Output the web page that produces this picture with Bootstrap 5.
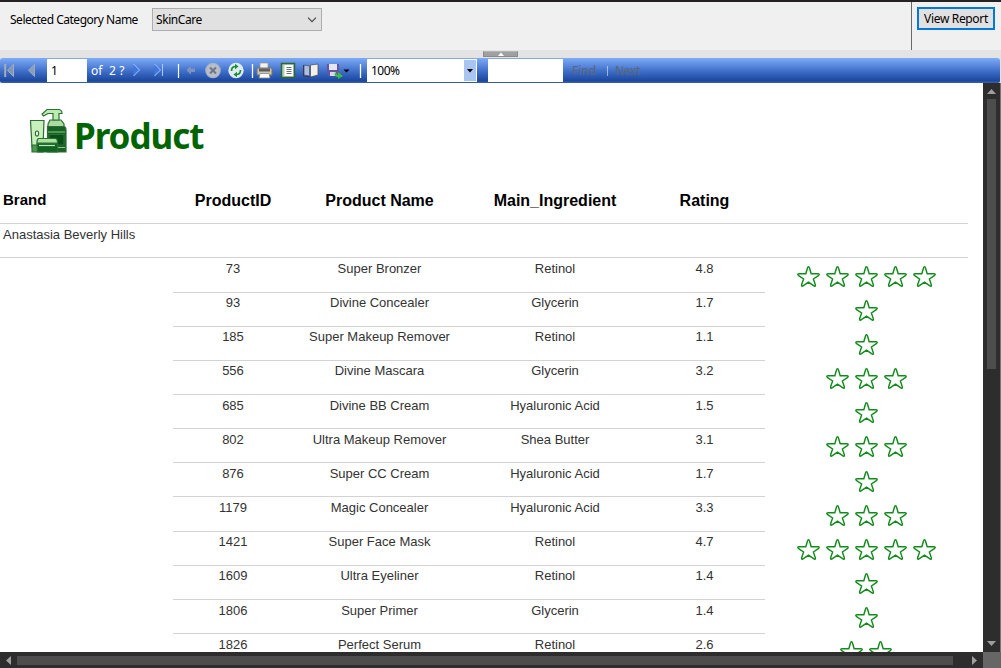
<!DOCTYPE html>
<html lang="en">
<head>
<meta charset="utf-8">
<title>Product report</title>
<link href="https://cdn.jsdelivr.net/npm/bootstrap@5.3.0/dist/css/bootstrap.min.css" rel="stylesheet">
<style>
body{font-family:"Liberation Sans",Arial,sans-serif;height:668px;width:1001px;background:#fff}
.ui{font-family:"Noto Sans","Open Sans",sans-serif;font-size:12px;line-height:16px;color:#000;white-space:nowrap}
.params{height:50px;background:#f0f0f0;border-top:2px solid #252223}
.plabel{width:142px;margin-left:10px;padding-top:10px;letter-spacing:-.49px}
.combo{width:170px;height:23px;margin-top:6px;border:1px solid #adadad;background:#e1e1e1;padding:0 4px 0 3px;letter-spacing:-.42px}
.runpane{width:90px;border-left:1px solid #696969;padding:5px 0 0 5px}
.run{width:78px;height:23px;border:2px solid #0078d7;background:#e1e1e1;border-radius:0;padding:0;letter-spacing:-.34px}
.splitter{height:8px;background:#e3e3e3}
.grip{width:35px;height:6px;margin-left:483px;margin-top:1px;background:#a0a0a0;border:1px solid #8a8a8a;border-top-color:#b5b5b5}
.tools{height:25px;background:#e3e3e3}
.toolbar{height:25px;width:1000px;background:linear-gradient(#7dabf5 0,#6594e6 20%,#3d6cc6 55%,#1c489f 90%,#3861ab 100%);border-radius:3px 3px 2px 2px;color:#fff}
.toolbar>*{flex:none}
.box{height:23px;background:#fff;color:#000;padding:4px 0 0 4px}
.dim{color:#5c6675}
.sheet{width:983px;height:569px;background:#fff}
.heading{height:94px;padding:24px 0 0 28px}
.title{font:bold 35px/58px "Noto Sans","Open Sans",sans-serif;color:#006400;letter-spacing:-1.05px;margin-left:6px}
.rpt{width:968px;font-size:13px;line-height:16px;color:#333}
.line{display:grid;grid-template-columns:173px 120px 173px 178px 121px 203px;text-align:center}
.line.head{height:47px;border-bottom:1px solid #d3d3d3;font-weight:700;font-size:16px;line-height:18px;color:#000;padding-top:15px}
.line.group{height:34.4px;border-bottom:1px solid #d3d3d3;padding:3px 0 0 3px;text-align:left}
.line.item{height:34.17px}
.cellv{border-bottom:1px solid #d3d3d3;padding-top:2.6px}
.stars{padding:6.200px 1px 0 0;gap:6px}
.stars svg{width:23px;height:23px;flex:none}
.vbar{width:18px;background:#2d2d2d;border-right:1px solid #777}
.vthumb{width:9px;height:270px;background:#4d4d4d;margin:5px 0 0 4px}
.hbar{height:16px;background:#2d2d2d}
.hthumb{width:936px;height:9px;background:#4d4d4d}
svg{display:block}
</style>
<script src="https://cdn.jsdelivr.net/npm/bootstrap@5.3.0/dist/js/bootstrap.bundle.min.js"></script>
</head>
<body class="overflow-hidden m-0">
<svg width="0" height="0" class="position-absolute"><symbol id="star" viewBox="0 0 24 24"><path d="M12 1.8C12.7 1.8 12.9 2.5 13.2 3.6L14.8 9.2H21.6C23.6 9.2 23.5 10.2 22.3 11L17.1 14.6L19 20.2C19.7 22.2 18.6 22.5 17.3 21.6L12 17.8L6.7 21.6C5.4 22.5 4.3 22.2 5 20.2L6.9 14.6L1.7 11C.5 10.2.4 9.2 2.4 9.2H9.2L10.8 3.6C11.1 2.5 11.3 1.8 12 1.8Z" fill="none" stroke="#128a1c" stroke-width="1.5"/></symbol></svg>

<div class="params ui d-flex">
  <div class="plabel">Selected Category Name</div>
  <div class="combo d-flex align-items-center justify-content-between"><span>SkinCare</span><svg width="10" height="6"><path d="M1 .7 5 4.7 9 .7" fill="none" stroke="#444" stroke-width="1.1"/></svg></div>
  <div class="runpane ms-auto"><button class="run ui d-block">View Report</button></div>
</div>
<div class="splitter d-flex"><div class="grip d-flex justify-content-center"><svg width="6" height="4"><path d="M0 4 3 .5 6 4Z" fill="#fff"/></svg></div></div>
<div class="tools">
<div class="toolbar ui d-flex align-items-center">
  <svg width="47" height="25"><g stroke="#b8bfcc" fill="#7f93b6"><path d="M5.2 6V19" stroke="#a4abb8" stroke-width="2"/><path d="M13.5 6.2V18.5L7.5 12.3Z" fill="#8296b8" stroke="#a3adbf"/><path d="M34.5 6.2V18.5L28.5 12.3Z" fill="#8c9dbb" stroke="#9ca8be"/></g></svg>
  <div class="box" style="width:40px">1</div>
  <span style="width:42px;padding-left:4px;letter-spacing:.1px">of&nbsp; 2 ?</span>
  <svg width="58" height="25"><path d="M4.5 6V18L10 12Z" fill="#3e78dc"/><path d="M4.5 6 10.5 12 4.5 18" fill="none" stroke="#a9c8ff"/><path d="M25.5 6V18L31.500 12Z" fill="#3e78dc"/><path d="M25.500 6 31.500 12 25.500 18M33.500 6V18" fill="none" stroke="#a9c8ff"/><path d="M49.500 6V20" stroke="#fff" stroke-width="1.2"/></svg>
  <svg width="61" height="25"><path d="M-1 12 4 8V10.500H8V14H4V16.500Z" fill="#7d93be"/><circle cx="26" cy="12.500" r="7.800" fill="#a9b4c9"/><circle cx="26" cy="12.500" r="6.500" fill="#b9bec7"/><path d="M23 9.500 29 15.500M29 9.500 23 15.500" stroke="#6d7789" stroke-width="2"/><circle cx="49" cy="12.500" r="7.700" fill="#dfe9f8"/><path d="M44.500 13C44.500 9.500 46 8.500 48.500 8.500M53.500 12C53.500 15.500 52 16.500 49.500 16.500" fill="none" stroke="#159326" stroke-width="1.700"/><path d="M48 5.800 51.500 8.500 48 11.300ZM50 13.700 46.500 16.500 50 19.200Z" fill="#159326"/></svg>
  <svg width="119" height="25"><path d="M4.500 6V20M112.500 6V20" stroke="#fff" stroke-width="1.300"/>
    <path d="M12 5H20V11H12Z" fill="#f3f1e9" stroke="#999" stroke-width=".7"/><path d="M9 10H24V17H9Z" fill="#c8c5bb" stroke="#77756e"/><path d="M11 10.500H22V13.500H11Z" fill="#5f5d59"/><path d="M12 15.500H21L22 20H11Z" fill="#fff" stroke="#888" stroke-width=".8"/><path d="M21 14h2v1h-2z" fill="#f1cb28"/>
    <path d="M33.500 5.500H46.500V19.500H33.500Z" fill="#b5d0ae" stroke="#2c6636" stroke-width="1.500"/><path d="M36.500 7H45V18H36.500Z" fill="#fff"/><path d="M38.500 9.500H43.500M38.500 11.500H43.500M38.500 13.500H43.500M38.500 15.500H43.500" stroke="#59606f" stroke-width=".9"/>
    <path d="M56 7 61.500 8V18L56 17Z" fill="#aebedb" stroke="#526795"/><path d="M62.500 7 70 6V17L62.500 19Z" fill="#f2f0e8" stroke="#4e5260" stroke-width=".8"/><path d="M55.500 7V18L62 19" fill="none" stroke="#3b3c47"/>
    <path d="M79 6H91V18H81L79 16Z" fill="#6654a2"/><path d="M81 6H89V12H81Z" fill="#e5e5ef"/><path d="M82 14H88V18H82Z" fill="#d8d9e6"/><path d="M87 14 90 17V14L95 18 90 21V19C87 19 86 17 87 14Z" fill="#3dbb3d"/><path d="M95.500 11.500H101.500L98.500 14.500Z" fill="#000"/></svg>
  <div class="box d-flex justify-content-between" style="width:110px"><span style="letter-spacing:-.5px">100%</span><svg width="12" height="21" style="margin:-3px 1px 0 0"><path d="M0 0H12V21H0Z" fill="#a8c4f0"/><path d="M3 9H9L6 12.500Z"/></svg></div>
  <div class="box" style="width:75px;margin-left:11px"></div>
  <span class="dim" style="width:35px;margin-left:9px">Find</span>
  <svg width="8" height="25"><path d="M-.5 8V18" stroke="#fff" stroke-width="2"/></svg>
  <span class="dim" style="letter-spacing:-.3px">Next</span>
</div></div>

<div class="d-flex">
<main class="sheet overflow-hidden">
  <div class="heading d-flex align-items-start">
    <svg width="40" height="48" viewBox="0 0 40 48"><g stroke="#2e6d35" stroke-width="1.2">
      <path d="M20 17 22 13H33L36 17V20H20Z" fill="#a9dda0"/><path d="M25 13V6.500H20L15.500 9 14 7 19 2.500H31Q34 3 34 6.500H31V13Z" fill="#b9edaf"/>
      <path d="M19.500 19.500H36Q38 20 38 23V45H19.500Z" fill="#176126"/><path d="M21 27.500H36V38H21Z" fill="#075018"/><path d="M20 25H37M23 40.500H37" stroke="#8bca84"/>
      <path d="M2.500 13.500H16L15 40H4Z" fill="#c7f0bd"/><path d="M4 38H15V45H4Z" fill="#4c9a4d"/><ellipse cx="9" cy="26.500" rx="1.600" ry="2.500" fill="#fff"/>
      <path d="M9 35Q9 31.500 11 31.500H27Q29.500 31.500 29.500 35V36H9Z" fill="#a9e49f"/><path d="M9 36.500H29.500V45H9.500Z" fill="#116323"/><path d="M11 38.500H27" stroke="#bfe8b8"/></g></svg>
    <div class="title">Product</div>
  </div>
  <div class="rpt">
    <div class="line head"><div class="text-start ps-1" style="font-size:15px;line-height:16px;margin-left:-1px">Brand</div><div>ProductID</div><div>Product Name</div><div>Main_Ingredient</div><div>Rating</div></div>
    <div class="line group"><div>Anastasia Beverly Hills</div></div>
    <div id="items"></div>
  </div>
</main>
<div class="vbar"><svg width="17" height="11"><path d="M4 11 8.500 6 13 11Z" fill="#9f9f9f"/></svg><div class="vthumb"></div><svg width="17" height="283"><path d="M4 272H13L8.500 277Z" fill="#9f9f9f"/></svg></div>
</div>
<div class="hbar d-flex align-items-center"><svg width="17" height="16"><path d="M11 4V13L6 8.500Z" fill="#9f9f9f"/></svg><div class="hthumb"></div><svg width="30" height="16"><path d="M19 4V13L24 8.500Z" fill="#9f9f9f"/></svg><svg width="18" height="16"><path d="M0 0H18V16H0Z" fill="#666"/></svg></div>
<script>
const rows=[[73,'Super Bronzer','Retinol','4.8',5],[93,'Divine Concealer','Glycerin','1.7',1],[185,'Super Makeup Remover','Retinol','1.1',1],[556,'Divine Mascara','Glycerin','3.2',3],[685,'Divine BB Cream','Hyaluronic Acid','1.5',1],[802,'Ultra Makeup Remover','Shea Butter','3.1',3],[876,'Super CC Cream','Hyaluronic Acid','1.7',1],[1179,'Magic Concealer','Hyaluronic Acid','3.3',3],[1421,'Super Face Mask','Retinol','4.7',5],[1609,'Ultra Eyeliner','Retinol','1.4',1],[1806,'Super Primer','Glycerin','1.4',1],[1826,'Perfect Serum','Retinol','2.6',2]];
document.getElementById('items').innerHTML=rows.map(r=>'<div class="line item"><div></div>'+r.slice(0,4).map(v=>`<div class="cellv">${v}</div>`).join('')+'<div class="stars d-flex justify-content-center">'+'<svg><use href="#star"/></svg>'.repeat(r[4])+'</div></div>').join('');
</script>
</body>
</html>
